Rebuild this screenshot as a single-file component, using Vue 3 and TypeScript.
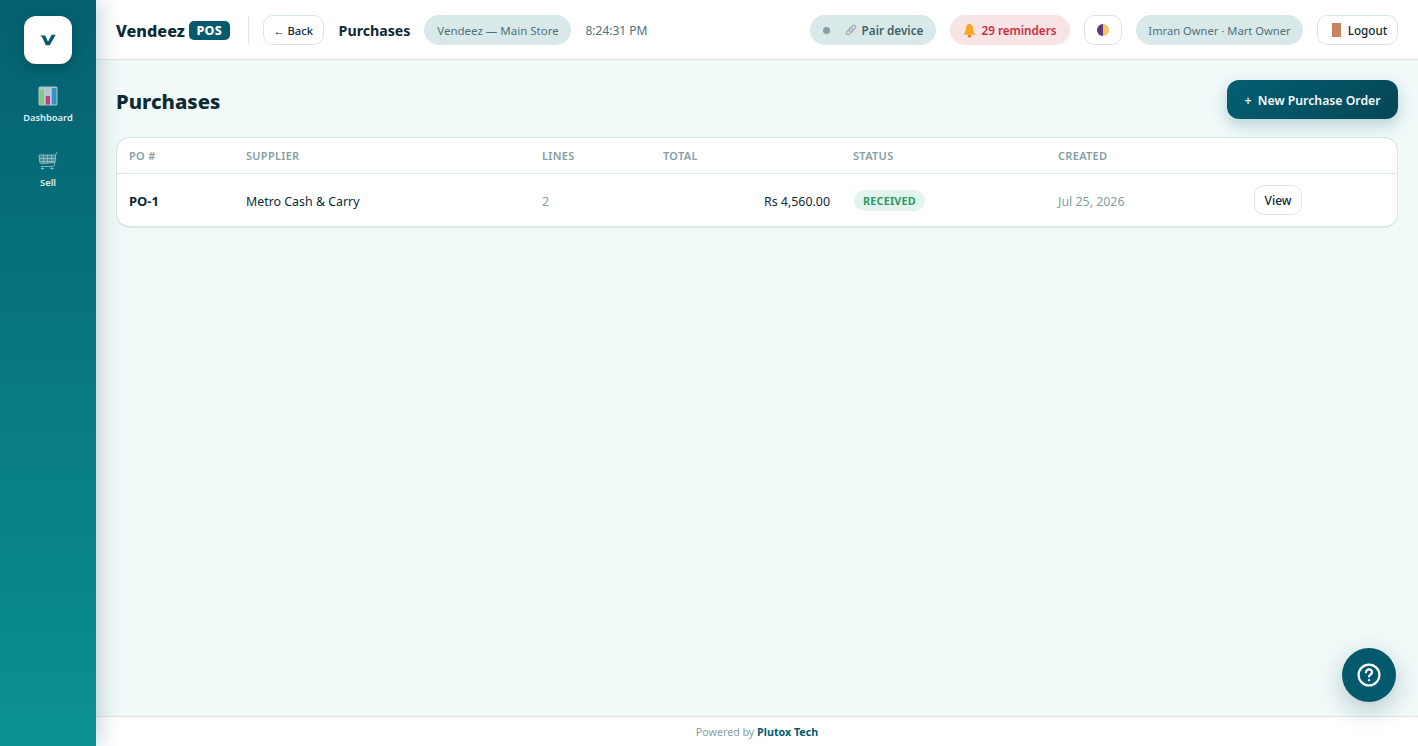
<script setup lang="ts">
interface PurchaseOrder {
  number: string
  supplier: string
  lines: number
  total: string
  status: string
  created: string
}

const columns = ['PO #', 'Supplier', 'Lines', 'Total', 'Status', 'Created', '']

const orders: PurchaseOrder[] = [
  {
    number: 'PO-1',
    supplier: 'Metro Cash & Carry',
    lines: 2,
    total: 'Rs 4,560.00',
    status: 'Received',
    created: 'Jul 25, 2026'
  }
]
</script>

<template>
  <div class="shell">
    <aside class="sidebar">
      <div class="logo">
        <svg width="16" height="12" viewBox="0 0 16 12">
          <path d="M0.3 1.5H5.2L8 7.8L11.6 0.8H15.7L9.8 11.2H5.9L2.2 3.2Z" fill="#045a6c" />
        </svg>
      </div>
      <nav class="nav">
        <a class="nav-item">
          <svg class="dash-icon" width="20" height="20" viewBox="0 0 20 20">
            <rect x="0.5" y="0.5" width="19" height="19" rx="1.5" fill="#c6d3dc" />
            <rect x="1.5" y="4" width="4.5" height="14.5" fill="#97d67c" />
            <rect x="7.5" y="10" width="4.5" height="8.5" fill="#d53d85" />
            <rect x="13.5" y="2" width="5" height="16.5" fill="#3d97d3" />
            <path d="M7 1V19M13 1V19" stroke="#e3e9ec" stroke-width="0.7" />
          </svg>
          <span>Dashboard</span>
        </a>
        <a class="nav-item">
          <svg class="cart-icon" width="20" height="20" viewBox="0 0 20 20" fill="none" stroke="#b9cfd4" stroke-width="0.9">
            <path d="M19 1L17.5 4.5L16.5 14C16.3 15 15.5 15.5 14.5 15.5H3" />
            <path d="M1 4H17.5L16.8 11.5L3.5 12.5C2.5 12.5 1.8 11.8 1.7 11Z" fill="#4f8f98" />
            <path d="M1.3 7.5H17M2 10.5H16.6M5.5 4V12.3M9.5 4V12M13.5 4V11.7" />
            <path d="M3 17.5H6M12.5 17.5H15.5" stroke-width="1.4" />
          </svg>
          <span>Sell</span>
        </a>
      </nav>
    </aside>

    <div class="column">
      <header class="topbar">
        <div class="brand">
          <strong>Vendeez</strong>
          <span class="brand-tag">POS</span>
        </div>
        <span class="divider"></span>
        <button class="btn back">← Back</button>
        <span class="page-name">Purchases</span>
        <span class="pill store">Vendeez — Main Store</span>
        <span class="clock">8:24:31 PM</span>

        <div class="topbar-right">
          <button class="pill pair">
            <span class="dot"></span>
            <svg width="14" height="14" viewBox="0 0 14 14" fill="none" stroke="#a9afb2" stroke-width="1.4">
              <rect x="-2.4" y="-1.7" width="8" height="3.4" rx="1.7" transform="translate(4.5 9.5) rotate(-50)" />
              <rect x="-5.6" y="-1.7" width="8" height="3.4" rx="1.7" transform="translate(9.5 4.5) rotate(-50)" />
            </svg>
            <span>Pair device</span>
          </button>
          <button class="pill reminders">
            <svg width="13" height="15" viewBox="0 0 13 15">
              <path d="M6.5 1C8.8 1 9.9 3 10 5.5C10.1 8.5 11 10 12.8 11.8H0.2C2 10 2.9 8.5 3 5.5C3.1 3 4.2 1 6.5 1Z" fill="#f5a623" />
              <ellipse cx="6.5" cy="13.2" rx="1.8" ry="1.4" fill="#d9822b" />
            </svg>
            <span>29 reminders</span>
          </button>
          <button class="btn theme" aria-label="Theme">
            <svg width="12" height="12" viewBox="0 0 12 12">
              <path d="M6 0A6 6 0 0 0 6 12Z" fill="#5b3a78" />
              <path d="M6 0A6 6 0 0 1 6 12Z" fill="#f7c65c" />
            </svg>
          </button>
          <span class="pill user">Imran Owner · Mart Owner</span>
          <button class="btn logout">
            <svg width="9" height="14" viewBox="0 0 9 14">
              <rect width="9" height="14" fill="#c6835f" />
            </svg>
            <span>Logout</span>
          </button>
        </div>
      </header>

      <main class="content">
        <div class="page-head">
          <h1>Purchases</h1>
          <button class="primary">+&nbsp; New Purchase Order</button>
        </div>

        <div class="card">
          <table>
            <colgroup>
              <col class="c-po" />
              <col class="c-supplier" />
              <col class="c-lines" />
              <col class="c-total" />
              <col class="c-status" />
              <col class="c-created" />
              <col />
            </colgroup>
            <thead>
              <tr>
                <th v-for="col in columns" :key="col">{{ col }}</th>
              </tr>
            </thead>
            <tbody>
              <tr v-for="order in orders" :key="order.number">
                <td class="po">{{ order.number }}</td>
                <td>{{ order.supplier }}</td>
                <td class="muted">{{ order.lines }}</td>
                <td class="total">{{ order.total }}</td>
                <td class="status"><span class="badge">{{ order.status }}</span></td>
                <td class="muted">{{ order.created }}</td>
                <td class="flush"><button class="btn view">View</button></td>
              </tr>
            </tbody>
          </table>
        </div>
      </main>

      <footer class="footer">
        Powered by&nbsp;<strong>Plutox Tech</strong>
      </footer>
    </div>

    <button class="help" aria-label="Help">
      <svg width="24" height="24" viewBox="0 0 24 24" fill="none" stroke="#fff" stroke-width="2.2" stroke-linecap="round">
        <circle cx="12" cy="12" r="10.4" />
        <path d="M9 9.3A3 3 0 0 1 15 9.5C15 11.5 12 11.7 12 13.6" />
        <path d="M12 17.2V17.3" />
      </svg>
    </button>
  </div>
</template>

<style>
html,
body {
  margin: 0;
  height: 100%;
}
</style>

<style scoped>
.shell {
  display: flex;
  height: 100vh;
  overflow: hidden;
  font-family: 'Noto Sans', 'Open Sans', sans-serif;
  font-size: 13px;
  color: #0c2a33;
  background: #f1f9f9;
}

button {
  font-family: inherit;
  cursor: pointer;
}

/* sidebar */
.sidebar {
  position: relative;
  z-index: 2;
  flex: 0 0 96px;
  display: flex;
  flex-direction: column;
  align-items: center;
  padding-top: 16px;
  box-sizing: border-box;
  background: linear-gradient(180deg, #04606f 0%, #0b9191 100%);
  box-shadow: 4px 0 20px rgba(4, 60, 72, 0.22);
}

.logo {
  width: 48px;
  height: 48px;
  border-radius: 12px;
  background: #fff;
  display: flex;
  align-items: center;
  justify-content: center;
  box-shadow: 0 4px 14px rgba(0, 0, 0, 0.18);
}

.nav {
  display: flex;
  flex-direction: column;
  align-items: center;
  gap: 27px;
  margin-top: 22px;
}

.nav-item {
  display: flex;
  flex-direction: column;
  align-items: center;
  gap: 5px;
  color: #e0eef0;
  font-size: 9.3px;
  font-weight: 600;
  line-height: 13px;
}

.dash-icon {
  opacity: 0.88;
}

.cart-icon {
  opacity: 0.8;
}

/* top bar */
.column {
  flex: 1;
  min-width: 0;
  display: flex;
  flex-direction: column;
}

.topbar {
  flex: 0 0 60px;
  box-sizing: border-box;
  display: flex;
  align-items: center;
  padding: 0 20px;
  background: #fff;
  border-bottom: 1px solid #d8e6e6;
}

.brand {
  display: flex;
  align-items: center;
  gap: 4px;
  padding-top: 2px;
  font-size: 16.2px;
  font-weight: 800;
  color: #0c2a33;
}

.brand strong {
  font-weight: 800;
}

.brand-tag {
  background: #045a6c;
  color: #fff;
  font-size: 12.5px;
  font-weight: 800;
  line-height: 19px;
  padding: 0 7.5px;
  border-radius: 5px;
  letter-spacing: 0.3px;
}

.divider {
  width: 1px;
  height: 28px;
  background: #dde8e8;
  margin: 0 14px 0 18px;
}

.btn {
  box-sizing: border-box;
  height: 30px;
  background: #fff;
  border: 1px solid #d8e6e6;
  border-radius: 10px;
  color: #0c2a33;
  font-size: 12px;
  font-weight: 500;
  padding: 1px 0 0;
  display: inline-flex;
  align-items: center;
  justify-content: center;
}

.back {
  width: 61px;
  font-size: 11.2px;
}

.page-name {
  margin-left: 15px;
  padding-top: 2px;
  font-size: 14.2px;
  font-weight: 700;
}

.pill {
  box-sizing: border-box;
  height: 30px;
  border: none;
  border-radius: 15px;
  padding: 1px 0 0;
  background: #d9e9ea;
  font-size: 11.7px;
  display: inline-flex;
  align-items: center;
  justify-content: center;
}

.store {
  width: 147px;
  margin-left: 14px;
  font-size: 11.5px;
  color: #51707a;
}

.clock {
  margin-left: 14px;
  padding-top: 1px;
  font-size: 12px;
  color: #51707a;
}

.topbar-right {
  margin-left: auto;
  display: flex;
  align-items: center;
  gap: 14px;
}

.pair {
  width: 126px;
  color: #3f5f69;
  font-weight: 600;
}

.dot {
  width: 7px;
  height: 7px;
  border-radius: 50%;
  background: #84a0a5;
  margin-right: 14px;
}

.pair svg {
  margin-right: 4px;
}

.reminders {
  width: 120px;
  background: #f8e3e5;
  color: #c8303f;
  font-weight: 600;
  gap: 5px;
}

.theme {
  width: 38px;
}

.user {
  width: 167px;
  font-size: 11.2px;
  color: #51707a;
}

.logout {
  width: 81px;
  gap: 7px;
  padding-left: 4px;
  font-size: 11.7px;
}

/* content */
.content {
  flex: 1;
  min-height: 0;
  padding: 20px 20px 0;
  background: #f1f9f9;
}

.page-head {
  display: flex;
  align-items: center;
  justify-content: space-between;
  margin-bottom: 18px;
}

h1 {
  margin: 0;
  padding-top: 3px;
  font-size: 20.3px;
  font-weight: 800;
  line-height: 36px;
  color: #0c2a33;
}

.primary {
  height: 39px;
  width: 171px;
  padding: 1px 0 0;
  border: none;
  border-radius: 12px;
  background: linear-gradient(135deg, #045f72 0%, #034655 100%);
  color: #f3fbfb;
  font-size: 12.25px;
  font-weight: 600;
  box-shadow: 0 6px 16px rgba(4, 90, 108, 0.25);
}

.card {
  background: #fff;
  border: 1px solid #d8e6e6;
  border-bottom-width: 2px;
  border-radius: 14px;
  overflow: hidden;
}

table {
  width: 100%;
  border-collapse: collapse;
  table-layout: fixed;
}

.c-po { width: 117px; }
.c-supplier { width: 296px; }
.c-lines { width: 121px; }
.c-total { width: 190px; }
.c-status { width: 205px; }
.c-created { width: 196px; }

th {
  height: 35px;
  padding: 0 12px;
  text-align: left;
  font-size: 11px;
  font-weight: 600;
  letter-spacing: 0.3px;
  text-transform: uppercase;
  color: #84a0a5;
  border-bottom: 1px solid #d8e6e6;
}

tbody tr {
  height: 52px;
}

td {
  padding: 3px 12px 0;
  font-size: 12.4px;
  color: #0c2a33;
}

td.flush {
  padding-top: 0;
}

td.status {
  padding: 2px 12px 0 13px;
}

.po {
  font-size: 13px;
  font-weight: 700;
}

td.muted {
  color: #84a0a5;
}

.total {
  text-align: right;
  padding-right: 11px;
}

.badge {
  display: inline-block;
  padding: 1px 9px 0;
  line-height: 20px;
  border-radius: 11px;
  background: #e3f4ec;
  color: #2b9a66;
  font-size: 10.8px;
  font-weight: 700;
  letter-spacing: 0.2px;
  text-transform: uppercase;
}

.view {
  width: 48px;
}

/* footer */
.footer {
  flex: 0 0 30px;
  box-sizing: border-box;
  display: flex;
  align-items: center;
  justify-content: center;
  background: #fff;
  border-top: 1px solid #d8e6e6;
  font-size: 10.7px;
  color: #84a0a5;
}

.footer strong {
  color: #045a6c;
  font-weight: 700;
}

.help {
  position: fixed;
  right: 22px;
  bottom: 44px;
  width: 54px;
  height: 54px;
  padding: 0;
  border: none;
  border-radius: 50%;
  background: #045a6c;
  display: flex;
  align-items: center;
  justify-content: center;
  box-shadow: 0 8px 24px rgba(4, 60, 72, 0.25);
}
</style>
